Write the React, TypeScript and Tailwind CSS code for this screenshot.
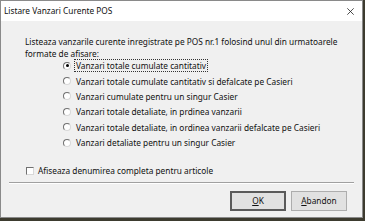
import React, { useState } from 'react';

const options = [
  'Vanzari totale cumulate cantitativ',
  'Vanzari totale cumulate cantitativ si defalcate pe Casieri',
  'Vanzari cumulate pentru un singur Casier',
  'Vanzari totale detaliate, in prdinea vanzarii',
  'Vanzari totale detaliate, in ordinea vanzarii defalcate pe Casieri',
  'Vanzari detaliate pentru un singur Casier',
];

export default function App() {
  const [selected, setSelected] = useState(0);
  const [fullName, setFullName] = useState(false);

  return (
    <div
      className="w-[365px] h-[221px] bg-[#3d3b2f] overflow-hidden text-[8.3px] text-[#111]"
      style={{ fontFamily: '"Noto Sans", "Open Sans", sans-serif' }}
    >
      <div className="w-[363px] h-[218px] bg-[#f0f0f0] border border-[#8a8a8a] flex flex-col">
        {/* Title bar */}
        <div className="h-[20px] bg-white flex items-center justify-between pl-[3px] pr-[8px] shrink-0">
          <span className="leading-none">Listare Vanzari Curente POS</span>
          <svg width="7" height="7" viewBox="0 0 7 7" className="mt-[1px]">
            <path d="M0.3 0.3 L6.7 6.7 M6.7 0.3 L0.3 6.7" stroke="#222" strokeWidth="0.8" />
          </svg>
        </div>

        {/* Body */}
        <div className="pl-[24px] pr-[12px] pt-[15px]">
          <p className="leading-[12px]">
            Listeaza vanzarile curente inregistrate pe POS nr.1 folosind unul din urmatoarele
            <br />
            formate de afisare:
          </p>
          <div className="ml-[38px] mt-[-2px] flex flex-col">
            {options.map((label, i) => (
              <label
                key={i}
                className="h-[15.4px] flex items-center cursor-default"
                onClick={() => setSelected(i)}
              >
                <span className="w-[8px] h-[8px] rounded-full bg-white border border-[#707070] border-r-[#d8d8d8] border-b-[#d8d8d8] flex items-center justify-center shrink-0">
                  {selected === i && <span className="w-[3px] h-[3px] rounded-full bg-black" />}
                </span>
                <span
                  className={
                    'ml-[4px] px-[1px] leading-[11px] whitespace-nowrap ' +
                    (selected === i ? 'outline outline-1 outline-dotted outline-[#333]' : '')
                  }
                >
                  {label}
                </span>
              </label>
            ))}
          </div>

          <label className="flex items-center h-[12px] mt-[15px] ml-[1px]" onClick={() => setFullName(!fullName)}>
            <span className="w-[8px] h-[8px] bg-white border border-[#707070] border-r-[#d8d8d8] border-b-[#d8d8d8] shrink-0 flex items-center justify-center text-[7px] leading-none">
              {fullName ? '✓' : ''}
            </span>
            <span className="ml-[4px]">Afiseaza denumirea completa pentru articole</span>
          </label>
        </div>

        {/* Separator */}
        <div className="mx-[8px] mt-[5px] border-t border-[#a0a0a0] border-b border-b-white" />

        {/* Buttons */}
        <div className="flex justify-end gap-[5px] pr-[15px] mt-[7px]">
          <button className="w-[56px] h-[20px] bg-[#e1e1e1] border-2 border-[#5a5a5a] flex items-center justify-center leading-none">
            <span><span className="underline">O</span>K</span>
          </button>
          <button className="w-[56px] h-[20px] bg-[#e1e1e1] border border-[#adadad] flex items-center justify-center leading-none">
            <span><span className="underline">A</span>bandon</span>
          </button>
        </div>
      </div>
    </div>
  );
}
